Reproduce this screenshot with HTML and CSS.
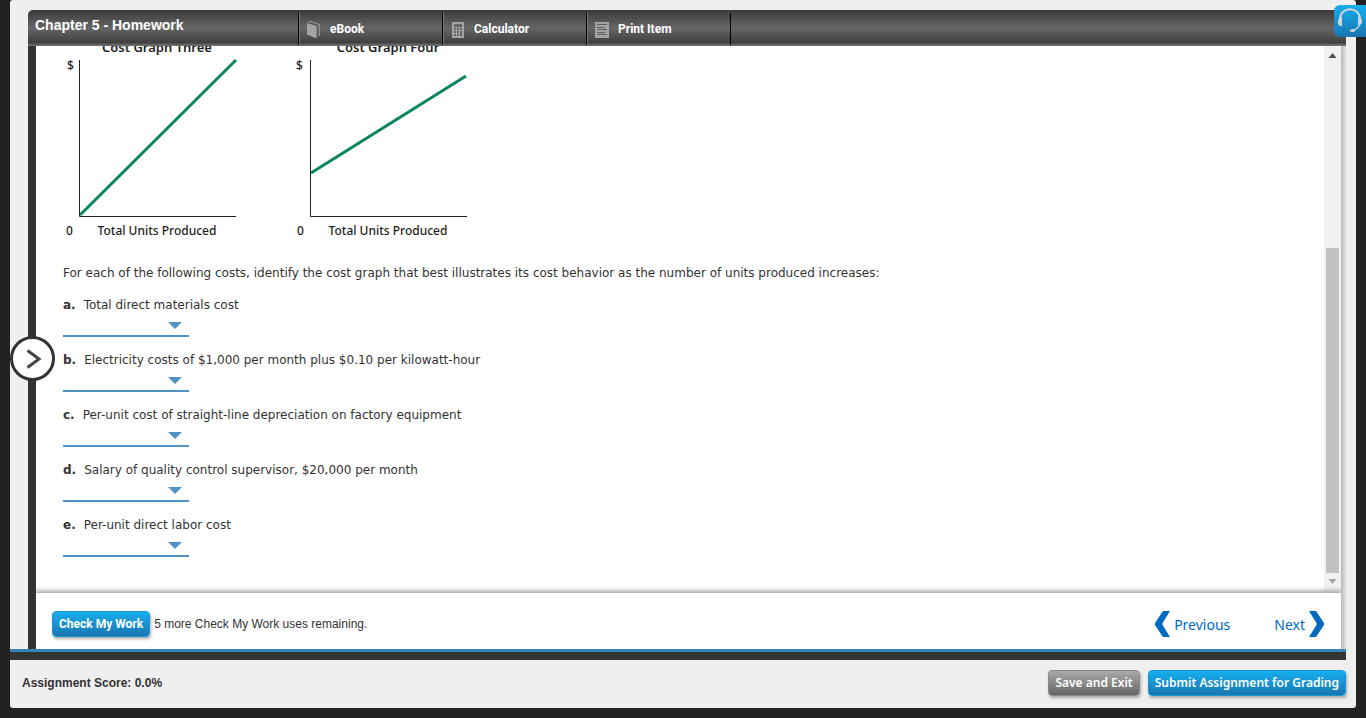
FILE: index.html
```html
<!DOCTYPE html>
<html lang="en">
<head>
<meta charset="utf-8">
<title>Chapter 5 - Homework</title>
<link rel="stylesheet" href="styles.css">
</head>
<body>
<div class="frame">
  <div class="player">
    <header class="toolbar">
      <h1 class="toolbar-title">Chapter 5 - Homework</h1>
      <nav class="tools">
        <button class="tool" type="button">
          <svg width="14" height="19" viewBox="0 0 14 19" aria-hidden="true"><path d="M0 2.500 2.500.5 13 4V16h-1.500V5L3 2Z" fill="#8c8c8c"/><path d="M0 3 9.500 6V18.500L0 14.500Z" fill="#a3a3a3"/><path d="M1 2.500 10.500 5.500V17" fill="none" stroke="#5c5c5c"/></svg>
          eBook
        </button>
        <button class="tool" type="button">
          <svg width="14" height="17" viewBox="0 0 14 17" aria-hidden="true"><path d="M1 1h12v16H1z" fill="#a3a3a3"/><path d="M3 3h8v3H3zM3 7h2v2H3zM6 7h2v2H6zM9 7h2v2H9zM3 10h2v2H3zM6 10h2v2H6zM9 10h2v5H9zM3 13h2v2H3zM6 13h2v2H6z" fill="#666"/></svg>
          Calculator
        </button>
        <button class="tool" type="button">
          <svg width="14" height="17" viewBox="0 0 14 17" aria-hidden="true"><path d="M0 1h14v16H0z" fill="#a3a3a3"/><path d="M2 3.500h10M2 6.500h8M2 8.500h10M2 11.500h8M2 13.500h10" stroke="#606060"/></svg>
          Print Item
        </button>
      </nav>
    </header>
    <main class="sheet">
      <div class="viewport">
        <div class="content">
          <div class="graphs">
            <svg class="graph" width="231" height="204" viewBox="0 0 231 204" role="img" aria-label="Cost Graph Three">
              <text class="graph-title" x="94" y="14" text-anchor="middle">Cost Graph Three</text>
              <text class="graph-label" x="4" y="32">$</text>
              <path class="cost-line" d="M17 177 173 22"/>
              <path class="axis" d="M16.500 22V178.500H173"/>
              <text class="graph-label" x="3" y="197">0</text>
              <text class="graph-label" x="94" y="197" text-anchor="middle">Total Units Produced</text>
            </svg>
            <svg class="graph" width="231" height="204" viewBox="0 0 231 204" role="img" aria-label="Cost Graph Four">
              <text class="graph-title" x="94" y="14" text-anchor="middle">Cost Graph Four</text>
              <text class="graph-label" x="2" y="32">$</text>
              <path class="cost-line" d="M17 135 172 38"/>
              <path class="axis" d="M16.500 22V178.500H173"/>
              <text class="graph-label" x="3" y="197">0</text>
              <text class="graph-label" x="94" y="197" text-anchor="middle">Total Units Produced</text>
            </svg>
          </div>
          <p class="prompt">For each of the following costs, identify the cost graph that best illustrates its cost behavior as the number of units produced increases:</p>
          <div class="question"><label for="qa"><b>a.</b>Total direct materials cost</label><span class="picker"><select id="qa"><option></option></select></span></div>
          <div class="question"><label for="qb"><b>b.</b>Electricity costs of $1,000 per month plus $0.10 per kilowatt-hour</label><span class="picker"><select id="qb"><option></option></select></span></div>
          <div class="question"><label for="qc"><b>c.</b>Per-unit cost of straight-line depreciation on factory equipment</label><span class="picker"><select id="qc"><option></option></select></span></div>
          <div class="question"><label for="qd"><b>d.</b>Salary of quality control supervisor, $20,000 per month</label><span class="picker"><select id="qd"><option></option></select></span></div>
          <div class="question"><label for="qe"><b>e.</b>Per-unit direct labor cost</label><span class="picker"><select id="qe"><option></option></select></span></div>
        </div>
        <div class="scrollbar" aria-hidden="true">
          <svg class="scroll-arrow" width="13" height="18" viewBox="0 0 13 18"><path d="M6.500 7 10.500 12h-8Z" fill="#505050"/></svg>
          <div class="scroll-gap"></div>
          <div class="scroll-thumb"></div>
          <svg class="scroll-arrow" width="13" height="20" viewBox="0 0 13 20"><path d="M6.500 11 10.500 6h-8Z" fill="#a3a3a3"/></svg>
        </div>
      </div>
      <div class="actions">
        <button class="btn btn-blue btn-check" type="button">Check My Work</button>
        <span class="remaining">5 more Check My Work uses remaining.</span>
        <nav class="pager">
          <a href="#previous"><svg width="15" height="26" viewBox="0 0 15 26" aria-hidden="true"><path d="M8 0h7L7 13l8 13H8L0 14v-2Z" fill="#006ac3"/></svg>Previous</a>
          <a href="#next">Next<svg width="15" height="26" viewBox="0 0 15 26" aria-hidden="true"><path d="M7 0H0l8 13-8 13h7l8-12v-2Z" fill="#006ac3"/></svg></a>
        </nav>
      </div>
    </main>
  </div>
  <div class="divider"></div>
  <footer class="footer">
    <span class="score">Assignment Score: 0.0%</span>
    <button class="btn btn-gray" type="button">Save and Exit</button>
    <button class="btn btn-blue" type="button">Submit Assignment for Grading</button>
  </footer>
  <button class="drawer" type="button" aria-label="Open panel"><svg width="16" height="20" viewBox="0 0 16 20" aria-hidden="true"><path d="M1.500 1.500 13 10 1.500 18.500" fill="none" stroke="#444" stroke-width="3"/></svg></button>
</div>
<button class="support" type="button" aria-label="Support">
  <svg width="32" height="32" viewBox="0 0 32 32" aria-hidden="true"><g fill="none" stroke="#d2d6d8"><path d="M6 14C6 1 26 1 26 14" stroke-width="2"/><path d="M25.500 19C25 22 23 24 19 25.500" stroke-width="1.500"/></g><g fill="#d2d6d8"><path d="M8 12v9H6.500C3 20 3 14 6.500 12.500ZM24 12v8h1.500C29 19 29 14 25.500 12.500Z"/><ellipse cx="18.500" cy="25.500" rx="2.500" ry="1.600"/></g></svg>
</button>
</body>
</html>
```
FILE: styles.css
```css
* { box-sizing: border-box; }
body {
  display: flex;
  min-height: 100vh;
  margin: 0;
  padding: 0 10px 10px;
  background: #222;
  color: #333;
  font-family: "Liberation Sans", Arial, sans-serif;
  font-size: 12px;
}
button { font: inherit; cursor: pointer; }
.frame {
  position: relative;
  display: flex;
  flex: 1;
  flex-direction: column;
  min-width: 0;
  background: #efefef;
  border-radius: 3px;
}
.player {
  display: flex;
  flex: 1;
  flex-direction: column;
  margin: 10px 10px 0 18px;
}
.toolbar {
  display: flex;
  height: 36px;
  border-radius: 5px 5px 0 0;
  background: linear-gradient(#3a3a3a, #666 50%, #404040 90%, #777);
  color: #fff;
}
.toolbar-title {
  width: 270px;
  margin: 0;
  padding-left: 7px;
  font-size: 14px;
  line-height: 31px;
}
.tools { display: flex; padding-top: 3px; }
.tool {
  display: flex;
  align-items: center;
  gap: 9px;
  width: 144px;
  height: 32px;
  padding: 0 0 0 8px;
  border: 0;
  border-left: 1px solid #000;
  box-shadow: inset 1px 0 #777;
  background: none;
  color: #fff;
  font-family: Roboto, "Liberation Sans", sans-serif;
  font-weight: bold;
}
.tool:last-child { width: 145px; border-right: 1px solid #000; }
.sheet {
  display: flex;
  flex: 1;
  flex-direction: column;
  padding-right: 5px;
  border-left: 8px solid #333;
  background: linear-gradient(to left, #e4e4e4, #b8b8b8 5px, #fff 5px);
}
.viewport {
  display: flex;
  flex: 1;
  overflow: hidden;
}
.content {
  flex: 1;
  margin-top: -8px;
  padding-left: 27px;
  font-family: Verdana, "DejaVu Sans", sans-serif;
}
.graphs { display: flex; }
.graph { display: block; }
.graph-title, .graph-label {
  fill: #231f20;
  font-family: "Noto Sans", sans-serif;
  font-size: 12px;
  font-weight: 500;
}
.graph-title { font-size: 13px; font-weight: 600; }
.axis { fill: none; stroke: #222; }
.cost-line { fill: none; stroke: #0b8560; stroke-width: 3; }
.prompt { margin: 22px 0 14px; line-height: 18px; }
.question { height: 55px; }
.question label { display: block; line-height: 18px; }
.question b { margin-right: 8px; }
.picker { position: relative; display: block; width: 126px; }
.picker::after {
  content: "";
  position: absolute;
  top: 8px;
  right: 7px;
  border: 7px solid transparent;
  border-top-color: #4f92c8;
  border-bottom: 0;
  pointer-events: none;
}
.picker select {
  display: block;
  width: 100%;
  height: 23px;
  appearance: none;
  border: 0;
  border-bottom: 2px solid #4f92c8;
  border-radius: 0;
  background: none;
}
.scrollbar {
  display: flex;
  flex-direction: column;
  width: 17px;
  padding: 0 2px;
  background: #f1f1f1;
}
.scroll-arrow { display: block; flex: none; }
.scroll-gap { flex: 184; }
.scroll-thumb { flex: 325; width: 13px; background: #c1c1c1; }
.actions {
  display: flex;
  align-items: center;
  height: 56px;
  padding: 6px 17px 0 16px;
  background: #fff;
  box-shadow: 0 -1px 5px 1px #999;
  clip-path: inset(-8px 0 0);
}
.btn {
  height: 26px;
  padding: 0 6px;
  border: 1px solid;
  border-radius: 4px;
  box-shadow: 1px 2px 3px #aaa;
  color: #fff;
  font-family: "Noto Sans", sans-serif;
  font-size: 12px;
  font-weight: 600;
  line-height: 24px;
}
.btn-blue { border-color: #1996d6; background: linear-gradient(#15aeef, #1a76b0); }
.btn-gray { border-color: #888; background: linear-gradient(#aaa, #666); }
.btn-check { font-family: Roboto, "Liberation Sans", sans-serif; font-weight: bold; }
.remaining { margin-left: 4px; }
.pager { display: flex; gap: 44px; margin-left: auto; }
.pager a {
  display: flex;
  align-items: center;
  gap: 4px;
  color: #006ac3;
  font-family: "Noto Sans", sans-serif;
  font-size: 14px;
  text-decoration: none;
}
.divider {
  height: 11px;
  margin-right: 10px;
  border-top: 3px solid #3484b5;
  background: #333;
}
.footer {
  display: flex;
  align-items: center;
  gap: 8px;
  height: 48px;
  padding: 0 10px 2px 12px;
}
.score { margin-right: auto; font-weight: bold; }
.drawer {
  position: absolute;
  top: 336px;
  left: 0;
  display: flex;
  align-items: center;
  justify-content: center;
  width: 45px;
  height: 45px;
  padding: 0 0 0 2px;
  border: 3px solid #333;
  border-radius: 50%;
  background: #fff;
}
.support {
  position: absolute;
  top: 5px;
  right: 0;
  width: 32px;
  height: 32px;
  padding: 0;
  border: 0;
  border-radius: 6px 0 0 6px;
  background: linear-gradient(#15aeef, #1a76b0);
}
.support svg { display: block; }
```
